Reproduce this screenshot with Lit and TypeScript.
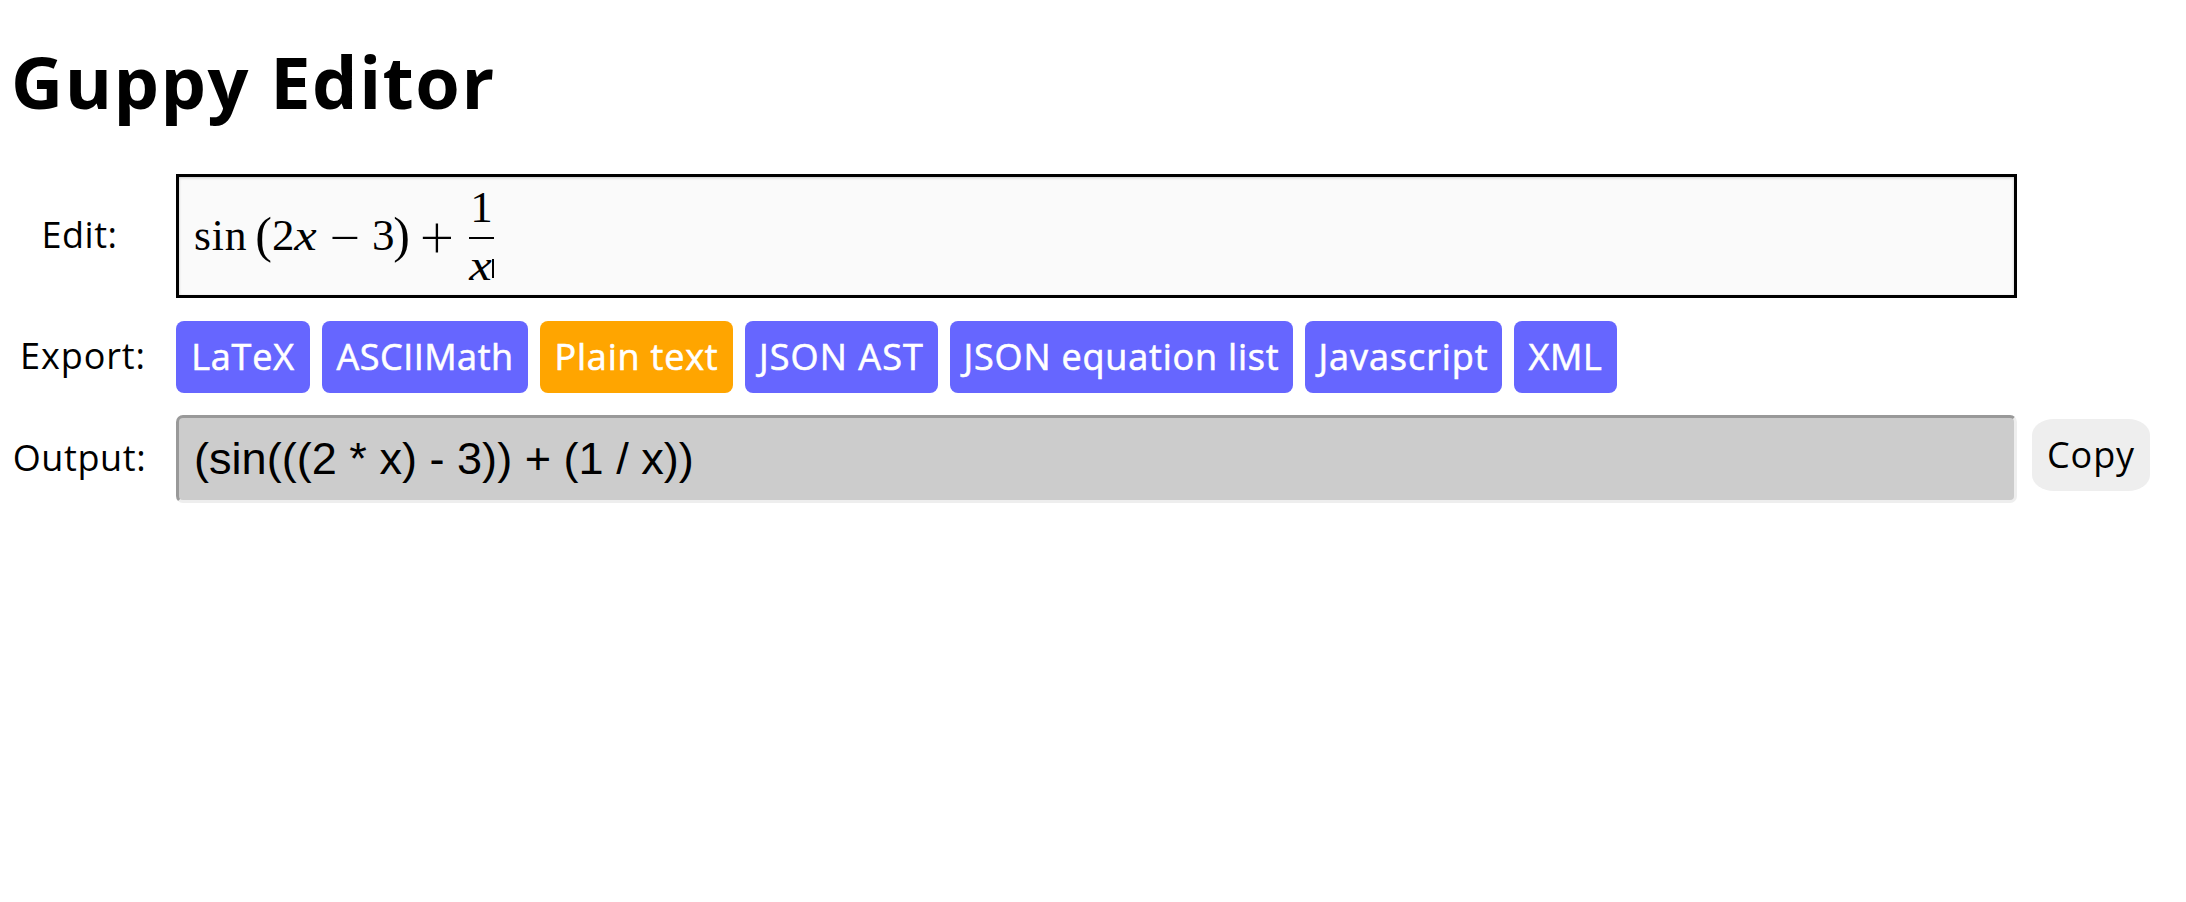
import { LitElement, html, css } from "lit";
import { customElement, state } from "lit/decorators.js";
import { classMap } from "lit/directives/class-map.js";
import { styleMap } from "lit/directives/style-map.js";

interface Format {
  label: string;
  width: number;
  tracking: number;
}

const FORMATS: Format[] = [
  { label: "LaTeX", width: 134, tracking: 0.8 },
  { label: "ASCIIMath", width: 206, tracking: 0.5 },
  { label: "Plain text", width: 193, tracking: 0.8 },
  { label: "JSON AST", width: 193, tracking: 1.1 },
  { label: "JSON equation list", width: 343, tracking: 0.8 },
  { label: "Javascript", width: 197, tracking: 0.95 },
  { label: "XML", width: 103, tracking: 0.7 },
];

@customElement("guppy-formula")
class GuppyFormula extends LitElement {
  static styles = css`
    :host {
      display: flex;
      align-items: center;
      box-sizing: border-box;
      width: 1841px;
      height: 124px;
      padding: 0 0 2px 15px;
      border: 3px solid #000;
      background: #fafafa;
      box-shadow: inset 0 1px 3px rgba(0, 0, 0, 0.2);
      font: 43.56px/50px "Liberation Serif", serif;
      color: #000;
    }
    span { display: block; text-align: center; flex: none; white-space: pre; }
    .fn { width: 54px; letter-spacing: 0.9px; text-align: left; }
    .open { width: 17px; margin-left: 7px; font-size: 50px; }
    .close { width: 17px; font-size: 50px; margin-left: -1px; }
    .digit { width: 22px; font-size: 45px; }
    .var { width: 25px; font-style: italic; transform: scaleX(1.16); margin-left: -1px; }
    .op { font-family: Lato, sans-serif; font-weight: 300; font-size: 60px; }
    .minus { width: 54px; }
    .plus { width: 54px; margin-right: 5px; }
    .frac { display: flex; flex-direction: column; width: 25px; height: 108px; }
    .num { height: 56px; line-height: 52px; font-size: 45px; }
    .bar { height: 2px; background: #000; }
    .den { display: flex; height: 50px; line-height: 53px; position: relative; }
    .caret { position: absolute; right: 0; top: 20px; width: 2px; height: 19px; background: #000; }
  `;

  render() {
    return html`
      <span class="fn">sin</span><span class="open">(</span><span class="digit">2</span
      ><span class="var">x</span><span class="op minus">−</span><span class="digit">3</span
      ><span class="close">)</span><span class="op plus">+</span>
      <div class="frac">
        <span class="num">1</span>
        <div class="bar"></div>
        <div class="den"><span class="var">x</span><i class="caret"></i></div>
      </div>
    `;
  }
}

@customElement("app-root")
class AppRoot extends LitElement {
  @state() private active = "Plain text";

  static styles = css`
    :host {
      display: block;
      box-sizing: border-box;
      height: 902px;
      padding: 34px 12px 0;
      overflow: hidden;
      background: #fff;
      color: #000;
      font: 36px/54px "Open Sans", "Noto Sans", sans-serif;
    }
    h1 {
      margin: 0 0 0 -1px;
      height: 140px;
      font-size: 72px;
      line-height: 94px;
      font-weight: 700;
      letter-spacing: 1.5px;
      white-space: nowrap;
    }
    .grid {
      display: grid;
      grid-template-columns: 135px 29px 1841px 15px 118px;
      grid-template-rows: 124px 23px 72px 22px 88px;
    }
    .label { grid-column: 1; white-space: nowrap; text-align: center; }
    .edit { grid-row: 1; padding-top: 34px; letter-spacing: 0.5px; }
    .export { grid-row: 3; padding: 8px 0 0 7px; letter-spacing: 0.9px; }
    .out { grid-row: 5; padding-top: 16px; letter-spacing: 0.6px; }
    guppy-formula { grid-column: 3; grid-row: 1; }
    .formats { grid-column: 3; grid-row: 3; display: flex; gap: 12px; }
    button {
      flex: none;
      height: 72px;
      padding: 0 0 1px;
      border: 0;
      font: inherit;
      line-height: 67px;
      text-align: center;
      white-space: nowrap;
      color: inherit;
    }
    .format {
      border-radius: 8px;
      background: #66f;
      color: #fff;
      -webkit-text-stroke: 0.6px #fff;
    }
    .active { background: orange; }
    .result {
      grid-column: 3;
      grid-row: 5;
      box-sizing: border-box;
      padding: 0 15px;
      border: 3px solid;
      border-color: #999 #eee #eee #999;
      border-radius: 7px;
      background: #ccc;
      font: 45.1px/82px "Liberation Sans", Arial, sans-serif;
      white-space: pre;
    }
    .copy {
      grid-column: 5;
      grid-row: 5;
      margin-top: 4px;
      letter-spacing: 0.9px;
      border-radius: 22px / 16px;
      background: #eee;
    }
  `;

  render() {
    return html`
      <h1>Guppy Editor</h1>
      <div class="grid">
        <div class="label edit">Edit:</div>
        <guppy-formula></guppy-formula>
        <div class="label export">Export:</div>
        <div class="formats">
          ${FORMATS.map(
            (f) => html`<button
              class=${classMap({ format: true, active: f.label === this.active })}
              style=${styleMap({ width: `${f.width}px`, letterSpacing: `${f.tracking}px` })}
              @click=${() => (this.active = f.label)}
            >${f.label}</button>`
          )}
        </div>
        <div class="label out">Output:</div>
        <div class="result">(sin(((2 * x) - 3)) + (1 / x))</div>
        <button class="copy">Copy</button>
      </div>
    `;
  }
}
